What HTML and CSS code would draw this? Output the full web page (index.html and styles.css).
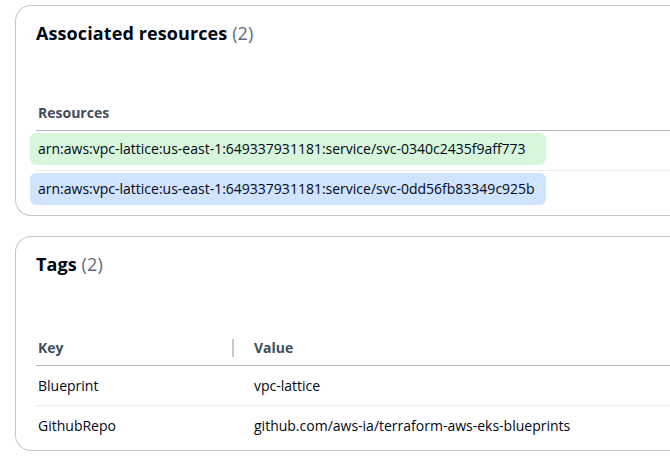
FILE: index.html
```html
<!DOCTYPE html>
<html lang="en">

<head>
    <meta charset="UTF-8">
    <meta name="viewport" content="width=device-width, initial-scale=1.0">
    <title>Service network details</title>
    <link rel="stylesheet" href="styles.css">
</head>

<body>
    <div class="page">
        <section class="card">
            <h2>Associated resources <span class="count">(2)</span></h2>
            <table class="table resources">
                <thead>
                    <tr>
                        <th>Resources</th>
                    </tr>
                </thead>
                <tbody>
                    <tr>
                        <td><span class="hl green">arn:aws:vpc-lattice:us-east-1:649337931181:service/svc-0340c2435f9aff773</span></td>
                    </tr>
                    <tr>
                        <td><span class="hl blue">arn:aws:vpc-lattice:us-east-1:649337931181:service/svc-0dd56fb83349c925b</span></td>
                    </tr>
                </tbody>
            </table>
        </section>

        <section class="card">
            <h2>Tags <span class="count">(2)</span></h2>
            <table class="table tags">
                <thead>
                    <tr>
                        <th class="col-key">Key</th>
                        <th class="col-value">Value</th>
                    </tr>
                </thead>
                <tbody>
                    <tr>
                        <td>Blueprint</td>
                        <td class="col-value">vpc-lattice</td>
                    </tr>
                    <tr>
                        <td>GithubRepo</td>
                        <td class="col-value">github.com/aws-ia/terraform-aws-eks-blueprints</td>
                    </tr>
                </tbody>
            </table>
        </section>
    </div>
</body>

</html>
```

FILE: styles.css
```css
body {
    margin: 0;
    font-family: "Open Sans", sans-serif;
    color: #000716;
    background-color: #fff;
}

.page {
    display: flex;
    flex-direction: column;
    gap: 20px;
    padding: 5px 0 0 15px;
}

/* card is cut off by the window on the right */
.card {
    border: 1px solid #c6c6cd;
    border-right: none;
    border-radius: 16px 0 0 16px;
    padding: 16px 0 5px 20px;
}

h2 {
    margin: 0;
    font-size: 18px;
    line-height: 22px;
    font-weight: 700;
    letter-spacing: 0.1px;
}

.count {
    font-weight: 400;
    color: #5f6b7a;
}

.table {
    width: 100%;
    border-collapse: collapse;
    font-size: 14px;
    line-height: 20px;
}

.resources {
    margin-top: 55px;
}

.tags {
    margin-top: 59px;
}

.table th {
    text-align: left;
    font-weight: 700;
    color: #414d5c;
    padding: 4px 2px 7px;
    border-bottom: 1px solid #b4b4bb;
}

.table td {
    padding: 10px 2px 9px;
}

.table tbody tr:first-child td {
    border-bottom: 1px solid #ebebf0;
}

.resources td {
    padding: 2px 0 5px;
}

.hl {
    display: block;
    box-sizing: border-box;
    width: 516px;
    margin-left: -6px;
    padding: 6px 8px;
    border-radius: 6px;
}

.green {
    background-color: #d8f6dc;
}

.blue {
    background-color: #d1e4ff;
}

.col-key {
    width: 194px;
}

.table .col-value {
    padding-left: 20px;
}

th.col-value {
    position: relative;
}

th.col-value::before {
    content: "";
    position: absolute;
    left: -2px;
    top: 5px;
    width: 2px;
    height: 18px;
    background-color: #c6c6cd;
}
```
